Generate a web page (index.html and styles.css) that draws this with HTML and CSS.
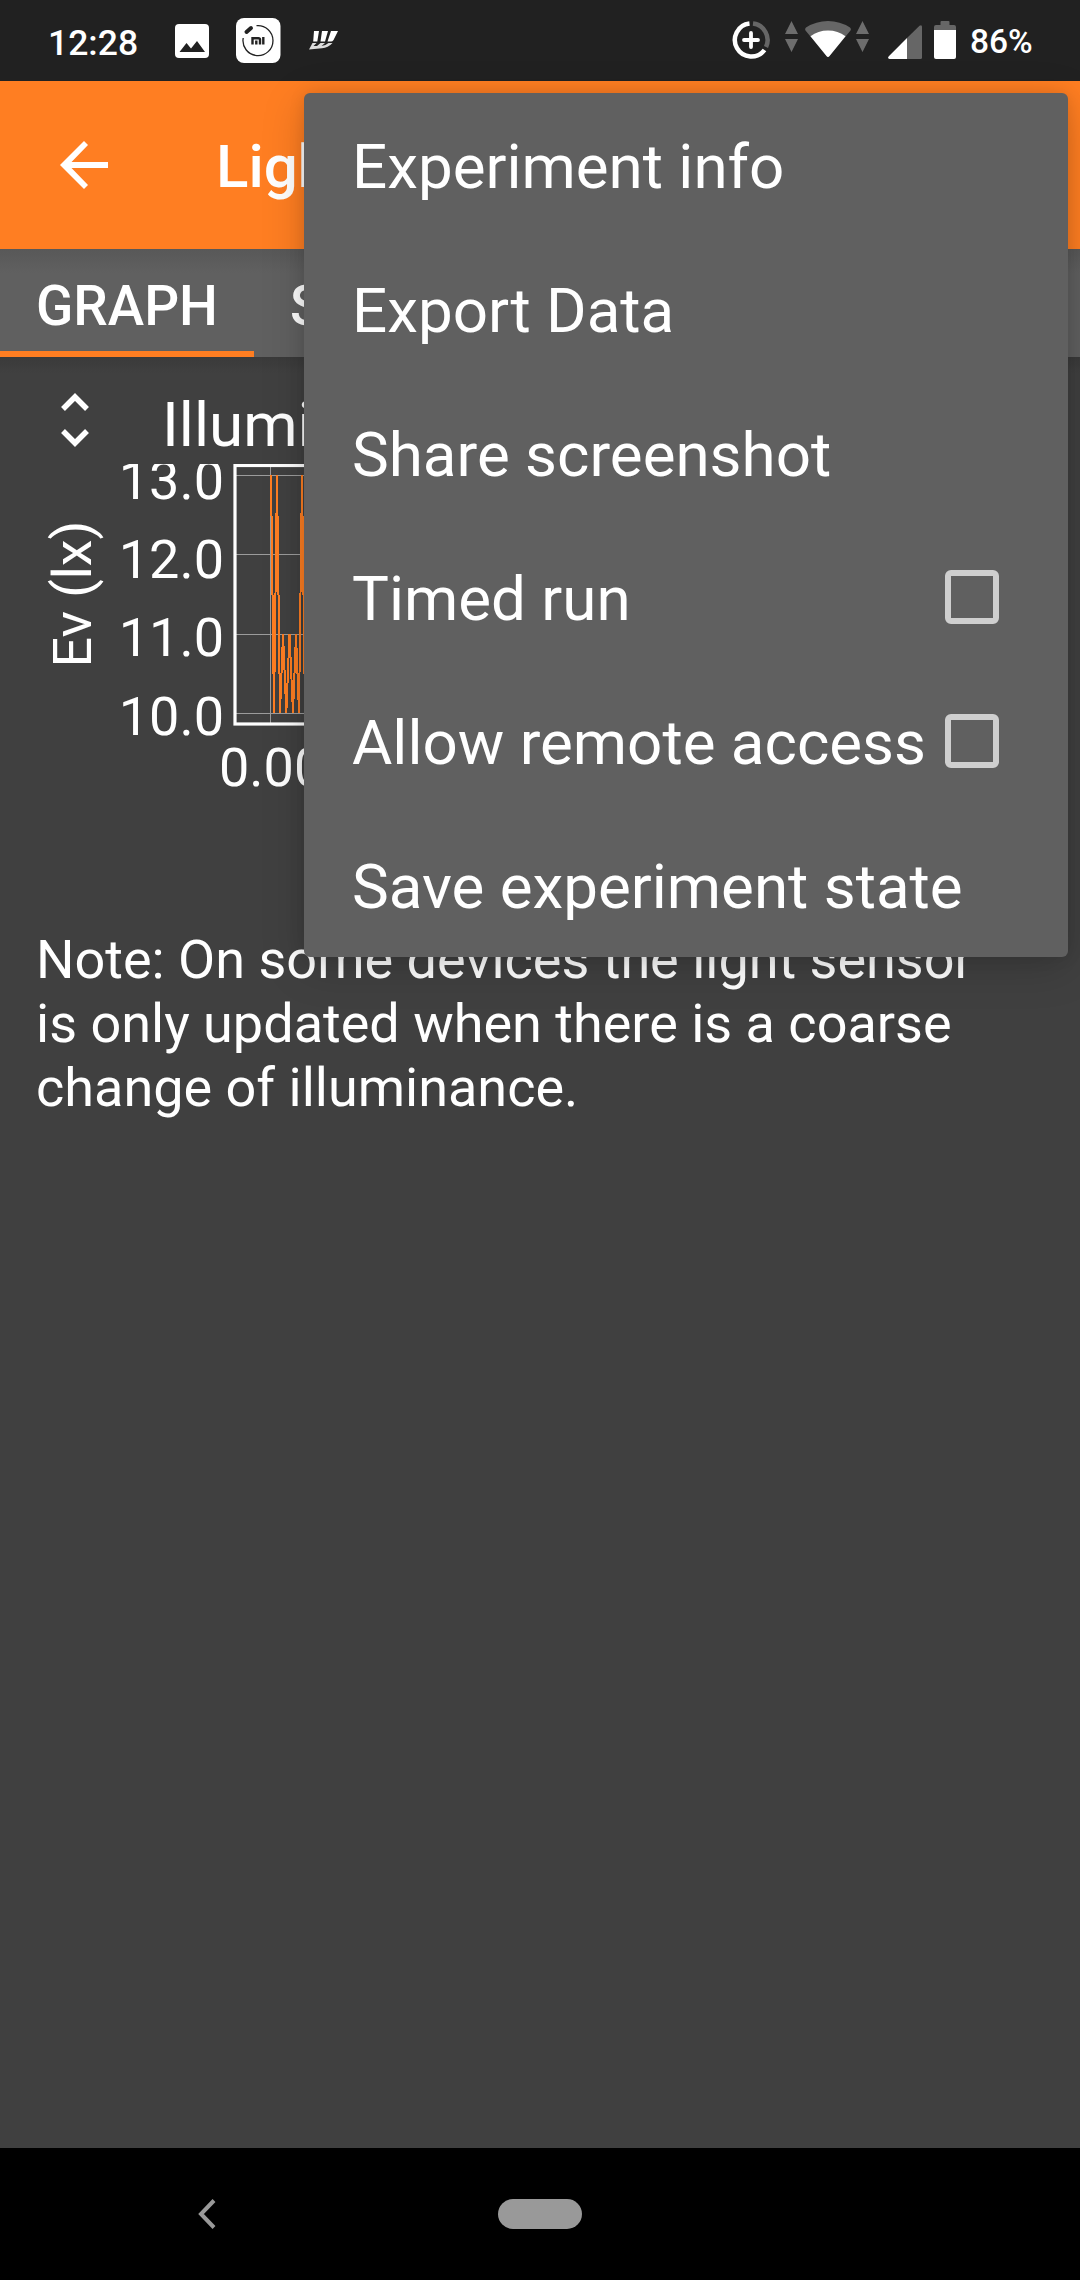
FILE: index.html
```html
<!DOCTYPE html>
<html lang="en">
<head>
<meta charset="utf-8">
<title>Light</title>
<link rel="stylesheet" href="styles.css">
</head>
<body>
<div class="screen">
  <header class="status">
    <span class="clock">12:28</span>
    <svg class="ic-photo" width="34" height="34" viewBox="0 0 34 34"><rect width="34" height="34" rx="4" fill="#fff"/><path d="M4.500 28L11.500 19L16 24.500L22 17L30 28Z" fill="#212121"/></svg>
    <svg class="ic-mi" width="45" height="45" viewBox="0 0 45 45"><rect width="44.500" height="45" rx="8" fill="#fff"/><path d="M20.500 7.700A15 15 0 1 1 7.200 20" fill="none" stroke="#222" stroke-width="1.300"/><path d="M10.500 14L15 10" stroke="#222" stroke-width="4" stroke-linecap="round"/><path d="M16.500 26.500V20.200H22.500Q24 20.200 24 21.500V26.500M20.300 22.500V26.500M27.300 19V26.500" fill="none" stroke="#222" stroke-width="2.400"/></svg>
    <svg class="ic-w" width="29" height="20" viewBox="0 0 29 20"><path d="M5 1H10L8.300 11.500H4.200ZM13 1H19L16 11.500H11.500ZM22 1H29L24.500 10Q23.500 11.500 22 11.500H18.500Z" fill="#fff"/><path d="M3.500 13H7.500L4.500 16H8L11.500 13H16L12.500 16Q16 16 19.500 13H23.500Q19 18 13 18.300L0 19.500Z" fill="#ddd"/></svg>
    <span class="spacer"></span>
    <svg class="ic-saver" width="38" height="38" viewBox="0 0 38 38"><g fill="none" stroke-width="4.500"><path d="M17.500 2.600A16.500 16.500 0 1 0 32.500 29" stroke="#fff"/><path d="M21 2.600A16.500 16.500 0 0 1 34 26" stroke="#666"/><path d="M19 12V26M12 19H26" stroke="#fff" stroke-width="3.800" stroke-linecap="round"/></g></svg>
    <svg class="ic-arrows" width="13" height="31" viewBox="0 0 13 31"><path d="M6.500 0L13 13H0ZM0 18H13L6.500 31Z" fill="#6d6d6d"/></svg>
    <svg class="ic-wifi" width="46" height="37" viewBox="0 0 46 37"><path d="M0.500 9.500Q-.5 8 1 6.500Q11 0 23 0T45 6.500Q46.500 8 45.500 9.500L24.500 35Q23 37 21.500 35Z" fill="#666"/><path d="M5.500 15.200Q13 9.500 23 9.500T40.500 15.200L24.500 35Q23 37 21.500 35Z" fill="#fff"/></svg>
    <svg class="ic-arrows2" width="13" height="31" viewBox="0 0 13 31"><path d="M6.500 0L13 13H0ZM0 18H13L6.500 31Z" fill="#6d6d6d"/></svg>
    <svg class="ic-cell" width="34" height="34" viewBox="0 0 34 34"><path d="M19 13L31.500 .7Q34-.8 34 2V32.500Q34 34 32.500 34H19Z" fill="#666"/><path d="M19 13V34H1.500Q-.8 33.500 .6 31.400Z" fill="#fff"/></svg>
    <svg class="ic-batt" width="22" height="38" viewBox="0 0 22 38"><path d="M0 9V6Q0 4 2 4H6.500V1Q6.500 0 7.500 0H14.500Q15.500 0 15.500 1V4H20Q22 4 22 6V9Z" fill="#666"/><path d="M0 9H22V36Q22 38 20 38H2Q0 38 0 36Z" fill="#fff"/></svg>
    <span class="percent">86%</span>
  </header>

  <div class="toolbar">
    <svg class="back" width="48" height="48" viewBox="0 0 48 48"><path d="M48 21V27H11.500L28 44L24 48L0 24L24 0L28 4L11.500 21Z" fill="#fff"/></svg>
    <h1 class="title">Light</h1>
  </div>

  <nav class="tabs">
    <span class="tab active">GRAPH</span>
    <span class="tab">SIMPLE</span>
  </nav>

  <main class="content">
    <div class="graph-head">
      <svg class="expand" width="28" height="54" viewBox="0 0 28 54"><path d="M2 16L14 4L26 16M2 38L14 50L26 38" fill="none" stroke="#fff" stroke-width="5.500"/></svg>
      <span class="graph-title">Illuminance</span>
    </div>
    <svg class="chart" width="1080" height="400" viewBox="0 0 1080 400">
      <g stroke="#9c9c9c" stroke-width="1" shape-rendering="crispEdges">
        <path d="M270.500 2V259M236 11.500H1044M236 90.500H1044M236 170.500H1044M236 249.500H1044"/>
      </g>
      <rect x="235" y="1.500" width="810" height="258.500" fill="none" stroke="#fff" stroke-width="3.200"/>
      <polyline points="271,11.500 274,249 277,11.500 280,249 283,170 286.300,249 289.500,170 293,249 296,170 299,249 302,11.500 305,249" fill="none" stroke="#ff7e22" stroke-width="2" stroke-linejoin="bevel" shape-rendering="crispEdges"/>
      <g class="tick" text-anchor="end">
        <text x="224" y="35">13.0</text>
        <text x="224" y="114">12.0</text>
        <text x="224" y="192">11.0</text>
        <text x="224" y="271">10.0</text>
      </g>
      <text class="tick" x="219" y="322">0.00</text>
      <text class="tick" text-anchor="middle" transform="translate(91 130) rotate(-90)">Ev (lx)</text>
    </svg>
    <p class="note">Note: On some devices the light sensor<br>is only updated when there is a coarse<br>change of illuminance.</p>
  </main>

  <footer class="navbar">
    <svg class="nav-back" width="18" height="30" viewBox="0 0 18 30"><path d="M16 1.500L3 15L16 28.500" fill="none" stroke="#999" stroke-width="4"/></svg>
    <span class="home"></span>
  </footer>

  <div class="menu">
    <div class="item">Experiment info</div>
    <div class="item">Export Data</div>
    <div class="item">Share screenshot</div>
    <div class="item">Timed run<span class="check"></span></div>
    <div class="item">Allow remote access<span class="check"></span></div>
    <div class="item">Save experiment state</div>
  </div>
</div>
</body>
</html>
```
FILE: styles.css
```css
* { box-sizing: border-box; margin: 0; padding: 0; }
body { font-family: Roboto, sans-serif; color: #fff; background: #404040; }
svg { display: block; flex: none; }
.screen { position: relative; width: 1080px; height: 2280px; display: flex; flex-direction: column; overflow: hidden; }

.status { height: 81px; background: #212121; display: flex; align-items: flex-start; padding: 0 47px 0 48px; font-weight: 500; }
.clock { width: 127px; font-size: 35.500px; line-height: 42px; padding-top: 22px; }
.ic-photo { margin-top: 24px; }
.ic-mi { margin: 18px 0 0 27px; }
.ic-w { margin: 30px 0 0 28px; }
.spacer { flex: 1; }
.ic-saver { margin-top: 21px; }
.ic-arrows { margin: 21px 0 0 15px; }
.ic-wifi { margin: 21px 0 0 7px; }
.ic-arrows2 { margin: 21px 0 0 5px; }
.ic-cell { margin: 25px 0 0 19px; }
.ic-batt { margin: 21px 0 0 12px; }
.percent { width: 63px; margin-left: 14px; font-size: 33.500px; line-height: 40px; padding-top: 22px; }

.toolbar { height: 168px; background: #ff7e22; display: flex; align-items: center; padding-left: 60px; }
.title { margin-left: 108px; font-size: 60px; font-weight: 500; line-height: 70px; padding-top: 4px; }

.tabs { height: 108px; display: flex; background: linear-gradient(#585858, #606060 24px); }
.tab { padding: 25px 36px 0; font-size: 54.800px; font-weight: 500; line-height: 65px; }
.active { width: 254px; border-bottom: 6px solid #ff7e22; }

.content { flex: 1; background: linear-gradient(#3a3a3a, #404040 16px); }
.graph-head { height: 107px; display: flex; padding-left: 61px; }
.expand { margin-top: 36px; }
.graph-title { margin-left: 73px; margin-top: 31px; font-size: 62px; line-height: 74px; }
.chart { overflow: hidden; }
.tick { font-size: 54px; fill: #fff; }
.note { margin: 64px 36px 0; font-size: 54px; line-height: 64px; white-space: nowrap; }

.navbar { height: 132px; background: #000; display: flex; align-items: center; padding-left: 198px; }
.home { width: 84px; height: 30px; margin-left: 282px; border-radius: 15px; background: #999; }

.menu { position: absolute; left: 304px; top: 93px; width: 764px; height: 864px; border-radius: 6px; background: #606060; box-shadow: 0 10px 44px rgba(0, 0, 0, .18), 0 0 16px rgba(0, 0, 0, .1); }
.item { height: 144px; display: flex; align-items: center; justify-content: space-between; padding: 4px 69px 0 48px; font-size: 61.900px; white-space: nowrap; }
.check { width: 54px; height: 54px; border: 6px solid #cfcfcf; border-radius: 6px; margin-top: -4px; }
```
